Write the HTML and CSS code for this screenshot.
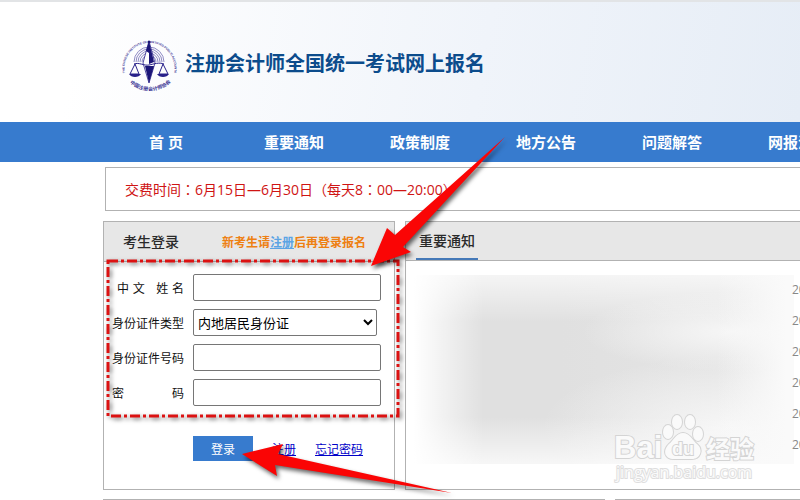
FILE: index.html
```html
<!DOCTYPE html>
<html lang="zh-CN">
<head>
  <meta charset="utf-8">
  <title>注册会计师全国统一考试网上报名</title>
  <link rel="stylesheet" href="styles.css">
</head>
<body>
  <header class="banner">
    <svg class="logo" viewBox="0 0 60 60">
      <defs>
        <path id="ringTop" d="M5 41 A25 25 0 1 1 54 41"></path>
        <path id="ringBottom" d="M7 48 A30 30 0 0 0 53 48"></path>
      </defs>
      <text class="ring-text"><textPath href="#ringTop">THE CHINESE INSTITUTE OF CERTIFIED PUBLIC ACCOUNTANTS</textPath></text>
      <text class="ring-text cn"><textPath href="#ringBottom" startOffset="4">中国注册会计师协会</textPath></text>
      <g fill="none" stroke="#8e8ac4" stroke-width="1">
        <path d="M14 30a15 15 0 0 1 30 0"></path>
        <path d="M16 30a13 13 0 0 1 26 0"></path>
        <path d="M18 30a11 11 0 0 1 22 0"></path>
        <path d="M20 30a9 9 0 0 1 18 0"></path>
        <path d="M22 30a7 7 0 0 1 14 0"></path>
      </g>
      <path d="M29 9L23 31l6 20 6-20z" fill="#fff" stroke="#28208a" stroke-width=".8"></path>
      <path d="M29 9l5 21-5 2zM25 34h9l-5 17zM29 9l-3 10 3 2z" fill="#1c1678"></path>
      <circle cx="29" cy="10" r="1.500" fill="#1c1678"></circle>
      <g fill="none" stroke="#28208a" stroke-width="1">
        <path d="M14 32c5-2 10 2 15 1s10-3 15-1"></path>
        <path d="M15 32l-5 10h9zM43 32l-4 10h9z"></path>
      </g>
      <path d="M9 42h12c-2 4-10 4-12 0zM37 42h12c-2 4-10 4-12 0z" fill="#28208a"></path>
    </svg>
    <h1>注册会计师全国统一考试网上报名</h1>
  </header>

  <nav class="menu">
    <a href="#">首 页</a>
    <a href="#">重要通知</a>
    <a href="#">政策制度</a>
    <a href="#">地方公告</a>
    <a href="#">问题解答</a>
    <a href="#">网报流程</a>
  </nav>

  <main class="content">
    <p class="pay-time">交费时间<span lang="zh-TW">：</span>6月15日—6月30日<span lang="zh-TW">（</span>每天8<span lang="zh-TW">：</span>00—20:00<span lang="zh-TW">）</span></p>

    <div class="columns">
      <section class="panel login">
        <div class="panel-head">
          <h2>考生登录</h2>
          <p class="tip">新考生请<a href="#">注册</a>后再登录报名</p>
        </div>
        <form>
          <div class="row">
            <label for="name" class="name-label"><span>中</span> <span>文</span> <span class="gap">姓</span> <span>名</span></label>
            <input type="text" id="name">
          </div>
          <div class="row">
            <label for="idType">身份证件类型</label>
            <select id="idType">
              <option>内地居民身份证</option>
            </select>
          </div>
          <div class="row">
            <label for="idNo">身份证件号码</label>
            <input type="text" id="idNo">
          </div>
          <div class="row">
            <label for="pwd" class="spread"><span>密</span> <span>码</span></label>
            <input type="password" id="pwd">
          </div>
          <div class="actions">
            <button type="submit">登录</button>
            <a href="#">注册</a>
            <a href="#">忘记密码</a>
          </div>
        </form>
      </section>

      <section class="panel news">
        <div class="panel-head">
          <h2>重要通知</h2>
        </div>
        <div class="news-body">
          <div class="blurred"></div>
          <ul class="dates">
            <li>2020</li>
            <li>2020</li>
            <li>2020</li>
            <li>2020</li>
            <li>2020</li>
            <li>2020</li>
          </ul>
        </div>
      </section>
    </div>

    <div class="columns lower">
      <section class="panel half"></section>
      <section class="panel rest"></section>
    </div>
  </main>

  <!-- red frame and arrows over the form -->
  <svg class="marks" width="800" height="500" viewBox="0 0 800 500">
    <rect class="frame" x="108" y="261" width="290" height="155"></rect>
    <path class="arrow" d="M505 137L395 235 387 228 371 266 411 252 403 247z"></path>
    <path class="arrow" d="M242 454L283 444 278 454 452 493 275 465 277 476z"></path>
  </svg>

  <svg class="watermark" width="160" height="80" viewBox="0 0 160 80">
    <g class="wm">
      <text x="3" y="48" class="wm-big">Bai</text>
      <ellipse cx="57" cy="22" rx="5" ry="7"></ellipse>
      <ellipse cx="66" cy="12" rx="5" ry="7"></ellipse>
      <ellipse cx="79" cy="12" rx="5" ry="7"></ellipse>
      <ellipse cx="87" cy="24" rx="5" ry="7"></ellipse>
      <path d="M72 23c7 0 9 7 14 11 7 6 3 15-5 15H63c-9 0-12-8-5-15 5-4 7-11 14-11z"></path>
      <text x="61" y="45" class="wm-du">du</text>
      <text x="95" y="48" class="wm-cn">经验</text>
      <text x="5" y="68" class="wm-url">jingyan.baidu.com</text>
    </g>
  </svg>
</body>
</html>
```

FILE: styles.css
```css
:root {
  --blue: #377bce;
  --line: #b2b2b2;
  --head: #e7e7e7;
  --red: #dc1212;
}

* {
  box-sizing: border-box;
}

body {
  position: relative;
  margin: 0;
  height: 100vh;
  overflow: hidden;
  background: #fff;
  color: #111;
  font-family: "Open Sans", "Noto Sans CJK SC", sans-serif;
  font-size: 12px;
}

h1, h2, p, ul {
  margin: 0;
  padding: 0;
}

.banner {
  display: flex;
  align-items: center;
  gap: 5px;
  height: 122px;
  padding-left: 120px;
  border-top: 2px solid #e2e4e6;
  background: linear-gradient(100deg, #fff 10%, #f0f4fa 60%, #e6edf6);
}

.logo {
  width: 60px;
  height: 60px;
}

.ring-text {
  fill: #3a3494;
  font: bold 3px "Liberation Sans", sans-serif;
}

.ring-text.cn {
  font: bold 5px "Noto Sans CJK SC", sans-serif;
}

h1 {
  padding-top: 4px;
  color: #0c4c8c;
  font-size: 20px;
  line-height: 30px;
  white-space: nowrap;
}

.menu {
  display: flex;
  height: 40px;
  padding-left: 105px;
  background: var(--blue);
}

.menu a {
  flex: 0 0 126px;
  color: #fff;
  font-size: 15px;
  font-weight: bold;
  line-height: 40px;
  text-align: center;
  text-decoration: none;
}

.menu a:first-child {
  padding-right: 4px;
}

.content {
  min-width: 900px;
  padding: 5px 0 0 103px;
}

.pay-time {
  height: 44px;
  margin-left: 2px;
  padding-left: 19px;
  border: 1px solid var(--line);
  color: #cf1414;
  font-size: 14px;
  line-height: 42px;
}

.pay-time span {
  font-family: "Noto Sans CJK TC", sans-serif;
}

.columns {
  display: flex;
  gap: 10px;
  margin-top: 10px;
}

.panel {
  border: 1px solid var(--line);
}

.login {
  flex: 0 0 292px;
  height: 269px;
}

.news {
  flex: 1;
}

.panel-head {
  display: flex;
  align-items: center;
  justify-content: space-between;
  height: 40px;
  padding: 0 28px 0 19px;
  border-bottom: 1px solid var(--line);
  background: var(--head);
}

.panel-head h2 {
  color: #2a2a2a;
  font-size: 14px;
  font-weight: 500;
  line-height: 40px;
}

.tip {
  color: #ee8012;
  font-weight: bold;
}

.tip a {
  color: #5ba4e4;
}

form {
  padding: 12px 0 0 8px;
}

.row {
  display: flex;
  align-items: center;
  gap: 9px;
  height: 27px;
  margin-bottom: 8px;
}

label {
  flex: 0 0 72px;
  white-space: nowrap;
}

.spread,
.name-label {
  display: flex;
  justify-content: space-between;
}

.name-label {
  padding-left: 5px;
}

.name-label .gap {
  margin-left: 8px;
}

input,
select {
  width: 188px;
  height: 27px;
  border: 1px solid #767676;
  border-radius: 2px;
  background: #fff;
}

select {
  width: 184px;
  padding: 0;
  color: #000;
  font-family: inherit;
  font-size: 13px;
}

.actions {
  display: flex;
  align-items: center;
  gap: 19px;
  margin: 30px 0 0 81px;
}

.actions button {
  width: 60px;
  height: 25px;
  padding: 0;
  border: 0;
  background: var(--blue);
  color: #fff;
  font-family: inherit;
  font-size: 12px;
}

.actions a {
  color: #0000c8;
}

.news .panel-head {
  align-items: flex-end;
  height: 39px;
  padding-left: 10px;
}

.news .panel-head h2 {
  padding: 4px 3px 0;
  border-bottom: 2px solid #4579b8;
  line-height: 34px;
}

.news-body {
  display: flex;
  padding-top: 14px;
}

.blurred {
  flex: 0 0 388px;
  height: 189px;
  background:
    linear-gradient(90deg, #fff 2%, #fff9 9%, transparent 20%, transparent 80%, #fafafa 98%),
    linear-gradient(0deg, #fffb, transparent 25%, transparent 75%, #fffa),
    radial-gradient(ellipse 150px 40px at 84% 30%, #f6f6f6, transparent),
    radial-gradient(ellipse 190px 70px at 84% 80%, #f6f6f6, transparent),
    linear-gradient(90deg, #e0e0e0 40%, #e6e6e6);
}

.dates {
  margin: -1px 0 0 -2px;
  color: #888;
  line-height: 31px;
  list-style: none;
}

.lower {
  margin-top: 9px;
}

.lower .panel {
  height: 60px;
}

.half {
  flex: 0 0 502px;
}

.rest {
  flex: 1;
}

.marks {
  position: absolute;
  top: 0;
  left: 0;
  pointer-events: none;
}

.frame {
  fill: none;
  stroke: var(--red);
  stroke-width: 3;
  stroke-dasharray: 10 3 3 3;
  filter: drop-shadow(2px 2px 2px #0008);
}

.arrow {
  fill: #fa0505;
  filter: drop-shadow(2px 3px 2px #0009);
}

.watermark {
  position: absolute;
  top: 410px;
  left: 611px;
  pointer-events: none;
}

.wm {
  fill: #fafafa;
  stroke: #d4d4d4;
  stroke-width: 2;
  paint-order: stroke;
}

.wm-big {
  font: bold 31px "Liberation Sans", sans-serif;
}

.wm-du {
  font: bold 18px "Liberation Sans", sans-serif;
}

.wm-cn {
  font: bold 24px "Noto Sans CJK SC", sans-serif;
}

.wm-url {
  font: 16px "Open Sans", sans-serif;
  stroke: #dedede;
}
```
